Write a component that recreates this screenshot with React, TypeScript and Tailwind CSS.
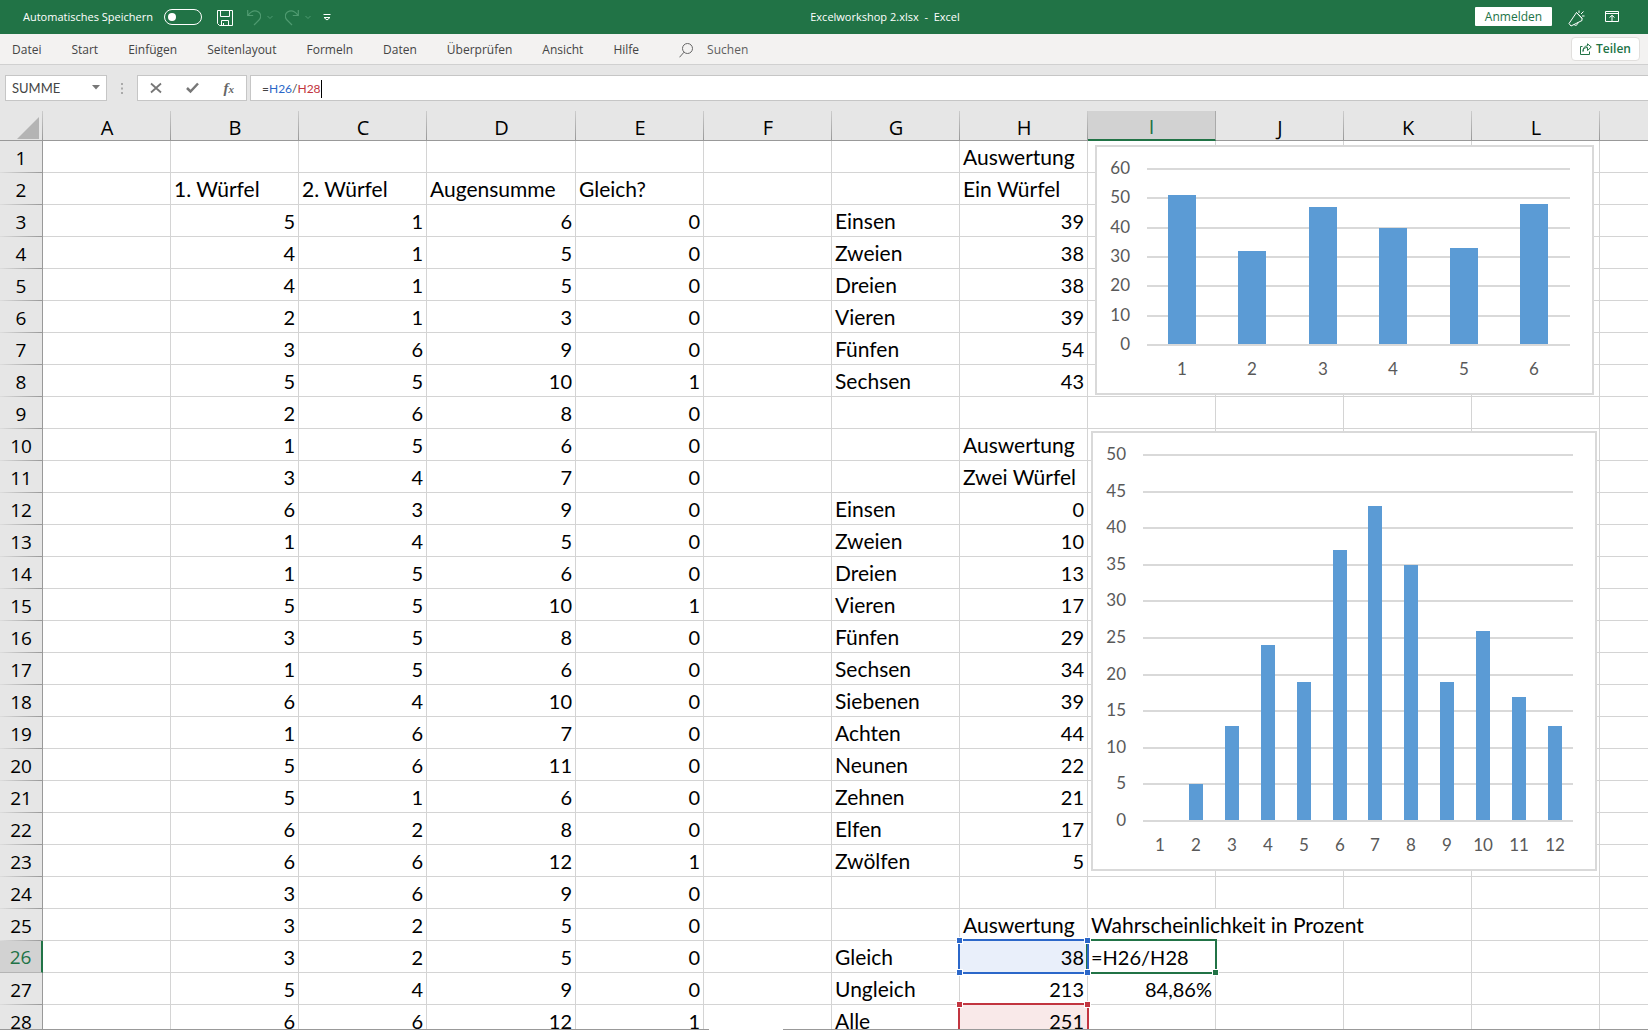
import React from 'react';

const columns = ['A', 'B', 'C', 'D', 'E', 'F', 'G', 'H', 'I', 'J', 'K', 'L'];

const dice: [number, number][] = [
  [5, 1], [4, 1], [4, 1], [2, 1], [3, 6], [5, 5], [2, 6], [1, 5], [3, 4],
  [6, 3], [1, 4], [1, 5], [5, 5], [3, 5], [1, 5], [6, 4], [1, 6], [5, 6],
  [5, 1], [6, 2], [6, 6], [3, 6], [3, 2], [3, 2], [5, 4], [6, 6],
];

const labels: Record<number, [string, string]> = {
  1: ['', 'Auswertung'],
  2: ['', 'Ein Würfel'],
  3: ['Einsen', '39'],
  4: ['Zweien', '38'],
  5: ['Dreien', '38'],
  6: ['Vieren', '39'],
  7: ['Fünfen', '54'],
  8: ['Sechsen', '43'],
  10: ['', 'Auswertung'],
  11: ['', 'Zwei Würfel'],
  12: ['Einsen', '0'],
  13: ['Zweien', '10'],
  14: ['Dreien', '13'],
  15: ['Vieren', '17'],
  16: ['Fünfen', '29'],
  17: ['Sechsen', '34'],
  18: ['Siebenen', '39'],
  19: ['Achten', '44'],
  20: ['Neunen', '22'],
  21: ['Zehnen', '21'],
  22: ['Elfen', '17'],
  23: ['Zwölfen', '5'],
  25: ['', 'Auswertung'],
  26: ['Gleich', '38'],
  27: ['Ungleich', '213'],
  28: ['Alle', '251'],
};

function cellText(row: number, col: string): string {
  if (row === 2) {
    const heads: Record<string, string> = { B: '1. Würfel', C: '2. Würfel', D: 'Augensumme', E: 'Gleich?' };
    if (heads[col]) return heads[col];
  }
  if (row >= 3) {
    const [a, b] = dice[row - 3];
    if (col === 'B') return String(a);
    if (col === 'C') return String(b);
    if (col === 'D') return String(a + b);
    if (col === 'E') return a === b ? '1' : '0';
  }
  if (col === 'G') return labels[row]?.[0] ?? '';
  if (col === 'H') return labels[row]?.[1] ?? '';
  if (row === 25 && col === 'I') return 'Wahrscheinlichkeit in Prozent';
  if (row === 27 && col === 'I') return '84,86%';
  return '';
}

function Handle({ className }: { className: string }) {
  return <span className={`absolute z-20 size-[7px] border border-white ${className}`} />;
}

function Cell({ row, col }: { row: number; col: string }) {
  const text = cellText(row, col);
  const numeric = /^[\d,]+%?$/.test(text);
  const base = 'relative h-8 whitespace-nowrap border-b border-r border-[#d4d4d4] px-[3px] pt-px align-middle leading-7';

  if (row === 26 && col === 'I') {
    return (
      <td className={base}>
        <input
          aria-label="Zelle I26"
          defaultValue="=H26/H28"
          className="relative z-10 block w-full bg-transparent leading-7 outline-none"
        />
        <span className="pointer-events-none absolute -inset-0.5 border-2 border-[#217346]" />
        <Handle className="-bottom-1 -right-1 bg-[#217346]" />
      </td>
    );
  }
  if (row === 26 && col === 'H') {
    return (
      <td className={`${base} bg-[#e9effa] text-right`}>
        {text}
        <span className="absolute -inset-0.5 z-10 border-2 border-[#2b67c9]" />
        <Handle className="-left-1 -top-1 bg-[#2b67c9]" />
        <Handle className="-right-1 -top-1 bg-[#2b67c9]" />
        <Handle className="-bottom-1 -left-1 bg-[#2b67c9]" />
        <Handle className="-bottom-1 -right-1 bg-[#2b67c9]" />
      </td>
    );
  }
  if (row === 28 && col === 'H') {
    return (
      <td className={`${base} bg-[#f9e9e9] text-right`}>
        {text}
        <span className="absolute -inset-0.5 border-2 border-[#c23540]" />
        <Handle className="-left-1 -top-1 bg-[#c23540]" />
        <Handle className="-right-1 -top-1 bg-[#c23540]" />
      </td>
    );
  }
  return (
    <td
      colSpan={row === 25 && col === 'I' ? 3 : 1}
      className={`${base} ${numeric ? 'text-right' : 'text-left text-[21px]'}`}
    >
      {text}
    </td>
  );
}

interface ChartProps {
  title: string;
  className: string;
  width: number;
  height: number;
  values: number[];
  max: number;
  step: number;
  left: number;
  right: number;
  top: number;
  bottom: number;
  barWidth: number;
  labelX: number;
  labelY: number;
}

function Chart(p: ChartProps) {
  const unit = (p.bottom - p.top) / p.max;
  const slot = (p.right - p.left) / p.values.length;
  const ticks = Array.from({ length: p.max / p.step + 1 }, (_, i) => i * p.step);
  return (
    <svg
      role="img"
      aria-label={p.title}
      width={p.width}
      height={p.height}
      viewBox={`0 0 ${p.width} ${p.height}`}
      className={`absolute z-10 bg-white font-['Lato',sans-serif] text-[17px] ${p.className}`}
    >
      <rect x="1" y="1" width={p.width - 2} height={p.height - 2} fill="#fff" stroke="#d9d9d9" strokeWidth="2" />
      {ticks.map((t) => {
        const y = Math.round(p.bottom - t * unit);
        return (
          <g key={t}>
            <rect x={p.left} y={y - 1} width={p.right - p.left} height="2" fill="#d9d9d9" />
            <text x={p.labelX} y={y + 5} textAnchor="end" fill="#595959">{t}</text>
          </g>
        );
      })}
      {p.values.map((v, i) => {
        const center = p.left + slot * (i + 0.5);
        const y = Math.round(p.bottom - v * unit);
        return (
          <g key={i}>
            {v > 0 && (
              <rect x={Math.floor(center - p.barWidth / 2)} y={y} width={p.barWidth} height={p.bottom - 1 - y} fill="#5b9bd5" />
            )}
            <text x={Math.floor(center)} y={p.labelY} textAnchor="middle" fill="#595959">{i + 1}</text>
          </g>
        );
      })}
    </svg>
  );
}

function Chevron() {
  return (
    <svg width="6" height="16" viewBox="0 0 6 16" fill="none" stroke="#4f9a70" strokeWidth="1">
      <path d="M0.5 7 3 9.5 5.5 7" />
    </svg>
  );
}

function TitleBar() {
  return (
    <header className="flex h-[34px] shrink-0 items-center bg-[#217346] pl-[23px] pr-[29px] text-[11px] text-white">
      <label htmlFor="autosave" className="w-[141px] whitespace-nowrap">Automatisches Speichern</label>
      <span className="relative h-4 w-[38px]">
        <input id="autosave" type="checkbox" role="switch" className="block h-4 w-[38px] appearance-none rounded-full border border-white" />
        <span className="pointer-events-none absolute left-1 top-1 size-2 rounded-full bg-white" />
      </span>
      <button aria-label="Speichern" className="ml-[15px] mt-0.5">
        <svg width="16" height="16" viewBox="0 0 16 16" fill="none" stroke="#fff">
          <path d="M.5.5h15v15H2.500l-2-2z M3.500.5v6h9v-6 M4.500 15.500v-5h7v5 M6.500 13v2.500" />
        </svg>
      </button>
      <button aria-label="Rückgängig" className="ml-3.5 flex items-center gap-1.5">
        <svg width="14" height="17" viewBox="0 0 14 17" fill="none" stroke="#4f9a70" strokeWidth="1.2">
          <path d="M.7 1v5.500h5.500 M1 6.300C4 2.300 8 .8 11.500 3c3 2 2.700 5.800.5 8l-5 5" />
        </svg>
        <Chevron />
      </button>
      <button aria-label="Wiederholen" className="ml-3 flex items-center gap-1.5">
        <svg width="14" height="17" viewBox="1 0 14 17" fill="none" stroke="#4f9a70" strokeWidth="1.2">
          <path d="M14.300 1v5.500H8.800 M14 6.300C11 2.300 7 .8 3.500 3c-3 2-2.700 5.800-.5 8l5 5" />
        </svg>
        <Chevron />
      </button>
      <button aria-label="Symbolleiste anpassen" className="ml-3">
        <svg width="8" height="16" viewBox="0 0 8 16" fill="none" stroke="#fff">
          <path d="M.5 5.500h7 M1 8.500l3 2.500 3-2.500z" />
        </svg>
      </button>
      <h1 className="flex-1 whitespace-pre pr-[36px] text-center">Excelworkshop 2.xlsx  -  Excel</h1>
      <button className="mb-px h-[19px] w-[77px] rounded-[1px] bg-white text-xs leading-[19px] text-[#217346]">Anmelden</button>
      <button aria-label="Neuigkeiten" className="ml-4 mt-0.5">
        <svg width="17" height="17" viewBox="0 0 17 17" fill="none" stroke="#fff">
          <path d="M8.500 2.500 1 13.500l2 2.500 11-5.500V8z M8.500 2.500l5.500 6 M6 14.300c.5 1.700 3.500 1.700 4-2 M11 3V.5 M13 4l2.500-2.500 M14 6h2.500" />
        </svg>
      </button>
      <button aria-label="Menüband-Anzeigeoptionen" className="ml-5">
        <svg width="14" height="12" viewBox="0 0 14 12" fill="none" stroke="#fff">
          <path d="M.5.500h13v10H.5z M.5 2.500h13 M7 10V4.500 M4.500 6.500 7 4.300l2.500 2.200" />
        </svg>
      </button>
    </header>
  );
}

function MenuBar() {
  const tabs = ['Datei', 'Start', 'Einfügen', 'Seitenlayout', 'Formeln', 'Daten', 'Überprüfen', 'Ansicht', 'Hilfe'];
  return (
    <div className="flex h-[31px] shrink-0 items-center border-b border-[#d0d0d0] bg-[#f3f2f1] pl-3 pr-2 text-xs text-[#444]">
      <nav className="flex gap-[30px] pt-0.5">
        {tabs.map((t) => (
          <button key={t}>{t}</button>
        ))}
      </nav>
      <label className="ml-10 flex flex-1 items-center gap-3.5 pt-0.5">
        <svg width="14" height="15" viewBox="0 0 14 15" fill="none" stroke="#666">
          <circle cx="8.500" cy="5.500" r="5" />
          <path d="M5 9.200.5 14.300" />
        </svg>
        <input aria-label="Suchen" placeholder="Suchen" className="w-40 bg-transparent outline-none placeholder:text-[#5e5e5e]" />
      </label>
      <button className="flex h-6 w-[69px] items-center justify-center gap-1 rounded-sm border border-[#e1dfdd] bg-white font-semibold text-[#217346]">
        <svg width="12" height="12" viewBox="0 0 12 12" fill="none" stroke="#217346">
          <path d="M2.500 3.500h-2v8h9v-3 M3 8.500C3 5.500 5 4.500 7.500 4.500v3L11.300 4 7.500.8v2C4.500 3 3 5 3 8.500z" />
        </svg>
        Teilen
      </button>
    </div>
  );
}

function FormulaBar() {
  return (
    <div className="flex h-[46px] shrink-0 items-start bg-[#e6e6e6] pl-[5px] pt-2.5 text-xs text-[#444]">
      <div className="relative">
        <select aria-label="Namenfeld" className="block h-[26px] w-[102px] appearance-none border border-[#c6c6c6] bg-white px-1.5 pt-0.5 font-['Lato',sans-serif] text-[13px]">
          <option>SUMME</option>
        </select>
        <svg className="pointer-events-none absolute right-[7px] top-2.5" width="8" height="5" viewBox="0 0 8 5">
          <path d="M0 0h8L4 4.500z" fill="#777" />
        </svg>
      </div>
      <svg className="mx-3.5 mt-2" width="2" height="11" viewBox="0 0 2 11" fill="#aaa">
        <path d="M0 0h2v2H0z M0 4.500h2v2H0z M0 9h2v2H0z" />
      </svg>
      <div className="flex h-[26px] w-[110px] items-center justify-between border border-[#c6c6c6] bg-white pl-3 pr-3">
        <button aria-label="Abbrechen">
          <svg width="12" height="12" viewBox="0 0 12 12" stroke="#777" strokeWidth="1.800" fill="none">
            <path d="M1 1.500 11 10.500 M11 1.500 1 10.500" />
          </svg>
        </button>
        <button aria-label="Eingeben">
          <svg width="13" height="12" viewBox="0 0 13 12" stroke="#777" strokeWidth="2.500" fill="none">
            <path d="M1 6l3.500 3.500L12 1.500" />
          </svg>
        </button>
        <button aria-label="Funktion einfügen" className="font-['Liberation_Serif',serif] text-[15px] italic leading-4 text-[#666]">
          <b className="font-bold">f</b><span className="text-[11px] font-bold">x</span>
        </button>
      </div>
      <div className="relative ml-[3px] h-[26px] flex-1 border-y border-l border-[#c6c6c6] bg-white font-['Lato',sans-serif]">
        <div aria-hidden="true" className="flex h-6 items-center pl-[11px] pt-px">
          =<span className="text-[#2b67c9]">H26</span>/<span className="text-[#c23540]">H28</span>
          <span className="h-[18px] w-px bg-black" />
        </div>
        <input
          aria-label="Bearbeitungsleiste"
          defaultValue="=H26/H28"
          className="absolute inset-0 w-full bg-transparent pl-[11px] text-transparent outline-none"
        />
      </div>
    </div>
  );
}

function Sheet() {
  return (
    <main className="relative min-h-0 flex-1 overflow-hidden bg-white">
      <table className="w-full table-fixed border-separate border-spacing-0 font-['Lato',sans-serif] text-xl text-black">
        <colgroup>
          <col className="w-[43px]" />
          {columns.map((c) => (
            <col key={c} className={c === 'D' ? 'w-[149px]' : 'w-32'} />
          ))}
          <col />
        </colgroup>
        <thead className="bg-[#e6e6e6] font-['Open_Sans',sans-serif]">
          <tr>
            <th className="h-[30px] border-b border-[#999] bg-[linear-gradient(#ccc,#999)] bg-[length:1px_100%] bg-right bg-no-repeat p-0">
              <svg className="ml-[17px] mt-1" width="22" height="22" viewBox="0 0 22 22">
                <path d="M22 0v22H0z" fill="#b4b4b4" />
              </svg>
            </th>
            {columns.map((c) => (
              <th
                key={c}
                className={
                  c === 'I'
                    ? 'h-[30px] border-b-2 border-r border-[#217346] border-r-[#aaa] bg-[#d2d2d2] p-0 pt-[3px] font-normal leading-6 text-[#217346]'
                    : 'h-[30px] border-b border-[#999] bg-[linear-gradient(#ccc,#999)] bg-[length:1px_100%] bg-right bg-no-repeat p-0 pt-1 font-normal leading-6'
                }
              >
                {c}
              </th>
            ))}
            <th className="border-b border-[#999]" />
          </tr>
        </thead>
        <tbody>
          {Array.from({ length: 28 }, (_, i) => i + 1).map((row) => (
            <tr key={row}>
              <th
                className={
                  row === 26
                    ? "h-8 border-b border-r-2 border-b-[#b4b4b4] border-r-[#217346] bg-[#d2d2d2] p-0 pt-px font-['Open_Sans',sans-serif] text-[19px] font-normal leading-7 text-[#217346]"
                    : "h-8 border-r border-[#999] bg-[#e6e6e6] bg-[linear-gradient(90deg,#ddd,#999)] bg-[length:100%_1px] bg-bottom bg-no-repeat p-0 pt-px font-['Open_Sans',sans-serif] text-[19px] font-normal leading-7"
                }
              >
                {row}
              </th>
              {columns
                .filter((c) => !(row === 25 && (c === 'J' || c === 'K')))
                .map((c) => (
                  <Cell key={c} row={row} col={c} />
                ))}
              <td className="border-b border-[#d4d4d4]" />
            </tr>
          ))}
        </tbody>
      </table>
      <Chart
        title="Auswertung Ein Würfel"
        className="left-[1095px] top-[34px]"
        width={499}
        height={250}
        values={[51, 32, 47, 40, 33, 48]}
        max={60}
        step={10}
        left={52}
        right={475}
        top={24}
        bottom={200}
        barWidth={28}
        labelX={35}
        labelY={230}
      />
      <Chart
        title="Auswertung Zwei Würfel"
        className="left-[1091px] top-80"
        width={506}
        height={440}
        values={[0, 5, 13, 24, 19, 37, 43, 35, 19, 26, 17, 13]}
        max={50}
        step={5}
        left={52}
        right={482}
        top={24}
        bottom={390}
        barWidth={14}
        labelX={35}
        labelY={420}
      />
    </main>
  );
}

export default function App() {
  return (
    <div className="flex h-screen flex-col overflow-hidden bg-[#e6e6e6] font-['Open_Sans',sans-serif]">
      <TitleBar />
      <MenuBar />
      <FormulaBar />
      <Sheet />
      <footer className="flex h-px shrink-0 bg-white">
        <span className="w-[709px] bg-[#999]" />
        <span className="ml-[74px] flex-1 bg-[#999]" />
      </footer>
    </div>
  );
}
